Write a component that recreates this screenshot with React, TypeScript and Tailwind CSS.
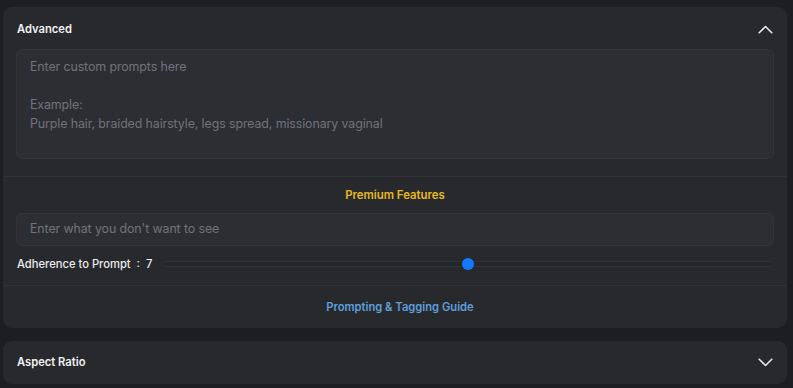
import { useState } from 'react'

function Chevron({ up }: { up?: boolean }) {
  return (
    <svg width="15" height="9" viewBox="0 0 15 9" fill="none" className="shrink-0">
      <polyline
        points={up ? '1.2,7.8 7.5,1.5 13.8,7.8' : '1.2,1.2 7.5,7.5 13.8,1.2'}
        stroke="#e8e8ea"
        strokeWidth="1.6"
        strokeLinecap="round"
        strokeLinejoin="round"
      />
    </svg>
  )
}

export default function App() {
  const [adherence] = useState(7)
  const pct = ((adherence - 1) / 12) * 100

  return (
    <div className="min-h-[388px] w-[793px] bg-[#1d1e22] pt-[7px] pl-[3px] font-['Inter',sans-serif] antialiased">
      <div className="w-[784px] rounded-[9px] bg-[#28292d]">
        <div className="flex items-center justify-between pl-[14px] pr-[14px] pt-[15px] pb-[13px]">
          <span className="text-[11.2px] leading-[14px] font-semibold text-[#f2f2f3]">Advanced</span>
          <Chevron up />
        </div>

        <div className="px-[13px] pb-[17px]">
          <div className="h-[110px] rounded-[6px] border border-[#34353a] bg-[#2d2e33] px-[13px] pt-[7px] text-[12.4px] tracking-[-0.1px] leading-[19px] text-[#70737a]">
            <p>Enter custom prompts here</p>
            <p>&nbsp;</p>
            <p>Example:</p>
            <p>Purple hair, braided hairstyle, legs spread, missionary vaginal</p>
          </div>
        </div>

        <div className="border-t border-[#313237] px-[13px]">
          <p className="pt-[11px] pb-[11px] text-center text-[11.4px] leading-[14px] font-semibold text-[#e9bb1d]">
            Premium Features
          </p>
          <div className="flex h-[33px] items-center rounded-[6px] border border-[#34353a] bg-[#2d2e33] px-[13px] text-[12.4px] tracking-[-0.1px] text-[#70737a]">
            Enter what you don't want to see
          </div>
          <div className="flex h-[20px] items-center gap-[9px] mt-[8px] mb-[11px] pl-[1px]">
            <span className="shrink-0 text-[11.2px] font-medium text-[#ececee] whitespace-pre">
              Adherence to Prompt  :  {adherence}
            </span>
            <div className="relative h-[6px] flex-1 rounded-full border border-[#313237] bg-[#25262a]">
              <div
                className="absolute top-1/2 h-[12px] w-[12px] -translate-x-1/2 -translate-y-1/2 rounded-full bg-[#1677ff]"
                style={{ left: `${pct}%` }}
              />
            </div>
          </div>
        </div>

        <div className="flex h-[43px] items-center justify-center border-t border-[#313237] pl-[10px]">
          <span className="text-[11.2px] font-semibold text-[#5d9fdc]">Prompting &amp; Tagging Guide</span>
        </div>
      </div>

      <div className="mt-[13px] flex h-[43px] w-[784px] items-center justify-between rounded-[9px] bg-[#28292d] pl-[14px] pr-[14px]">
        <span className="text-[11.2px] font-semibold text-[#f2f2f3]">Aspect Ratio</span>
        <Chevron />
      </div>
    </div>
  )
}
